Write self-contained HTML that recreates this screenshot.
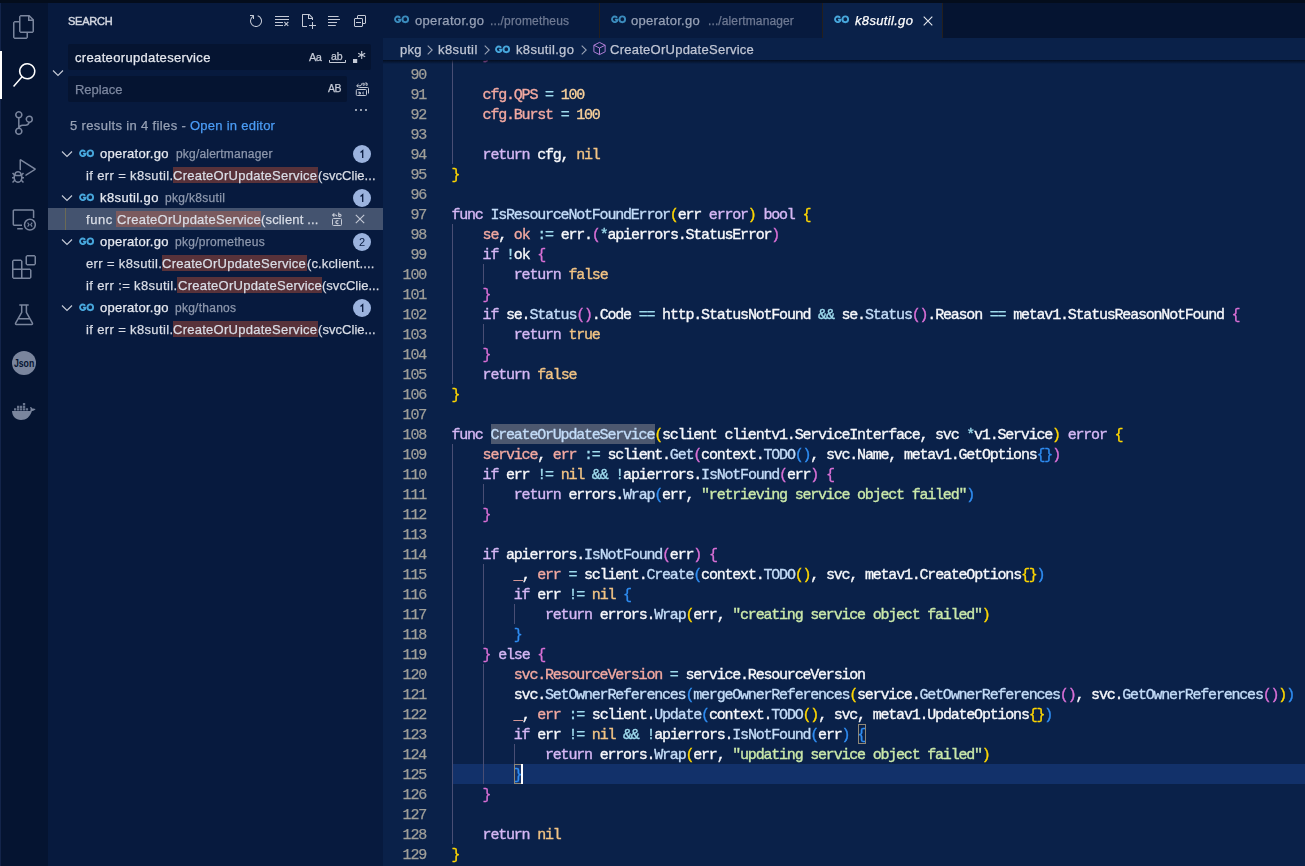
<!DOCTYPE html>
<html><head><meta charset="utf-8"><title>k8sutil.go</title><style>
*{box-sizing:border-box}
html,body{margin:0;padding:0}
body{width:1305px;height:866px;overflow:hidden;position:relative;background:#0a2149;font-family:"Liberation Sans",sans-serif;font-size:13px;color:#d6dae3}
.abs{position:absolute}
.t{position:absolute;line-height:1;white-space:pre;will-change:transform;-webkit-text-stroke:.25px}
#top{left:0;top:0;width:1305px;height:3px;background:#040d1c}
#act{left:0;top:3px;width:48px;height:863px;background:#051431}
#act .edge{position:absolute;left:0;top:0;width:1px;height:863px;background:#13244a}
#act .ind{position:absolute;left:0;top:48px;width:2px;height:48px;background:#fff}
#act svg{position:absolute}
#side{left:48px;top:0;width:335px;height:866px;background:#071a3e}
#sidetop{left:48px;top:0;width:335px;height:3px;background:#040d1c}
.inp{position:absolute;background:#051431;border-radius:2px}
.selrow{position:absolute;left:0;width:335px;height:22px;background:#44536f}
.badge{position:absolute;width:18px;height:18px;border-radius:9px;background:#9bb3de;color:#0a1c40;font-size:11px;line-height:18px;text-align:center}
.hl{background:#58323a;box-shadow:0 -1px 0 #5c2f35,0 1px 0 #5c2f35}
.sel .hl{background:#7d5a5d;box-shadow:0 -1px 0 #7d5a5d,0 1px 0 #7d5a5d}
#tabs{left:383px;top:3px;width:922px;height:35px;background:#051431}
.tab{position:absolute;top:0;height:35px;background:#071a3e;border-right:1px solid #241f1c}
.tab.on{background:#0a2149}
#crumbs{left:383px;top:38px;width:922px;height:22px;background:#0a2149}
#shadow{left:383px;top:60px;width:922px;height:4px;background:linear-gradient(rgba(3,11,26,.85),rgba(3,11,26,0))}
#ed{left:383px;top:60px;width:922px;height:806px;overflow:hidden}
#edin{position:absolute;left:0;top:-60px;width:922px;height:866px}
.ln{position:absolute;left:0;width:43px;height:20px;text-align:right;color:#a09f99;padding-top:2px;will-change:transform;-webkit-text-stroke:.25px}
.cl{position:absolute;left:69px;width:853px;height:20px;white-space:pre}
.cl.cur{background:#12316a}
.ln,.cl{font-family:"Liberation Mono",monospace;font-size:15px;letter-spacing:-1.2015px;line-height:20px}
.tx{position:relative;top:2px;left:-.6px;color:#f7f8fb;will-change:transform;-webkit-text-stroke:.35px}
.g{position:absolute;top:0;width:1px;height:20px;background:#494e74}
.k{color:#d6b8f5}.f{color:#c3dcf8}.h{color:#c3dcf8}
.hb{position:absolute;top:0;height:20px;background:#4d586f}.v{color:#f2a9a1}.o{color:#9fdcee}.n{color:#f8d09a}.c{color:#f3c484}.s{color:#cbe9aa}
.b1{color:#ffd700}.b2{color:#da70d6}.b3{color:#2f8df2}
.bm{}
.bmb{position:absolute;height:20px;width:8px;border:1px solid #8f8878}
.cursor{position:absolute;width:2px;height:20px;background:#fff}
</style></head><body>
<div id="top" class="abs"></div>
<div id="act" class="abs"><div class="edge"></div><div class="ind"></div>
<svg style="left:12px;top:12px" width="24" height="24" viewBox="0 0 24 24" fill="#7a859d"><path d="M17.5 0h-9L7 1.5V6H2.5L1 7.500v15.070L2.500 24h12.070L16 22.570V18h4.700l1.300-1.430V4.500L17.500 0zm0 2.120l2.380 2.380H17.500V2.120zm-3 20.380h-12v-15H7v9.070L8.500 18h6v4.500zm6-6h-12v-15H16V6h4.500v10.500z"/></svg>
<svg style="left:12px;top:60px" width="24" height="24" viewBox="0 0 24 24" fill="#ffffff"><path d="M15.250 0a8.250 8.250 0 0 0-6.180 13.720L1 22.880l1.120 1 8.050-9.120A8.251 8.251 0 1 0 15.250.010V0zm0 15a6.750 6.750 0 1 1 0-13.500 6.750 6.750 0 0 1 0 13.500z"/></svg>
<svg style="left:12px;top:108px" width="24" height="24" viewBox="0 0 24 24" fill="#7a859d"><path d="M21.007 8.222A3.738 3.738 0 0 0 15.045 5.200a3.737 3.737 0 0 0 1.156 6.583 2.988 2.988 0 0 1-2.668 1.670h-2.990a4.456 4.456 0 0 0-2.989 1.165V7.400a3.737 3.737 0 1 0-1.494 0v9.117a3.776 3.776 0 1 0 1.816.099 2.990 2.990 0 0 1 2.668-1.667h2.990a4.484 4.484 0 0 0 4.223-3.039 3.736 3.736 0 0 0 3.250-3.687zM4.565 3.738a2.242 2.242 0 1 1 4.484 0 2.242 2.242 0 0 1-4.484 0zm4.484 16.441a2.242 2.242 0 1 1-4.484 0 2.242 2.242 0 0 1 4.484 0zm8.221-9.715a2.242 2.242 0 1 1 0-4.485 2.242 2.242 0 0 1 0 4.485z"/></svg>
<svg style="left:12px;top:156px" width="24" height="24" viewBox="0 0 24 24" fill="#7a859d"><path d="M10.940 13.500l-1.320 1.320a3.730 3.730 0 0 0-7.240 0L1.060 13.500 0 14.560l1.720 1.720-.220.220V18H0v1.500h1.500v.080c.077.489.214.966.410 1.420L0 22.940 1.060 24l1.650-1.650A4.308 4.308 0 0 0 6 24a4.310 4.310 0 0 0 3.290-1.650L10.940 24 12 22.940 10.090 21c.198-.464.336-.951.410-1.450v-.100H12V18h-1.500v-1.500l-.220-.220L12 14.560l-1.060-1.060zM6 13.500a2.250 2.250 0 0 1 2.250 2.250h-4.500A2.250 2.250 0 0 1 6 13.500zm3 6a3.330 3.330 0 0 1-3 3 3.330 3.330 0 0 1-3-3v-2.250h6v2.250zm14.760-9.900v1.260L13.500 17.370V15.600l8.500-5.370L9 2v9.460a5.070 5.070 0 0 0-1.500-.720V.630L8.640 0l15.120 9.600z"/></svg>
<svg style="left:12px;top:204px" width="24" height="24" viewBox="0 0 24 24" fill="none" stroke="#7a859d" stroke-width="1.500"><path d="M10 18.350H2.300a1 1 0 0 1-1-1V4a1 1 0 0 1 1-1H20.600a1 1 0 0 1 1 1V10.900M5.200 21.700H10.800"/><circle cx="17.900" cy="17.700" r="5.400"/><path d="M15.600 15.700l1.500 2-1.500 2M20.200 15.700l-1.500 2 1.500 2" stroke-width="1.100"/></svg>
<svg style="left:12px;top:252px" width="24" height="24" viewBox="0 0 24 24" fill="#7a859d"><path d="M13.500 1.500L15 0h7.500L24 1.500V9l-1.500 1.500H15L13.500 9V1.500zm1.500 0V9h7.500V1.500H15zM0 15V6l1.500-1.500H9L10.500 6v7.500H18l1.500 1.500v7.500L18 24H1.500L0 22.500V15zm9-1.500V6H1.500v7.500H9zM9 15H1.500v7.500H9V15zm1.500 7.500H18V15h-7.500v7.500z"/></svg>
<svg style="left:12px;top:300px" width="24" height="24" viewBox="0 0 24 24" fill="none" stroke="#7a859d" stroke-width="1.500" stroke-linejoin="round"><path d="M7.300 2.100H16.700M9.700 2.100V9.400L3.600 20.200a.8.800 0 0 0 .7 1.200H19.700a.8.800 0 0 0 .7-1.200L14.400 9.400V2.100M6.600 15.700H17.400"/></svg>
<svg style="left:12px;top:348px" width="24" height="24" viewBox="0 0 24 24"><circle cx="12" cy="12" r="12" fill="#7a859d"/><text transform="translate(12.100,16) scale(.760,1)" x="0" y="0" text-anchor="middle" font-family="Liberation Sans, sans-serif" font-weight="bold" font-size="11.500" fill="#051431">Json</text></svg>
<svg style="left:12px;top:396px" width="24" height="24" viewBox="0 0 24 24" fill="#7a859d"><path d="M0 11.900H18.300c.5-1.500.3-2.900-.3-3.900 1-.3 1.800.2 2.200 1.500 1-.2 2.300-.1 3.400.6-.7 1.300-2 1.900-3.700 1.800C18.200 17.600 14.400 20.900 9 20.900 3.600 20.900.3 17.300 0 11.900z"/><path d="M2 9.200h2.300v2.300h-2.300zM5 9.200h2.300v2.300h-2.300zM7.9 9.200h2.300v2.300h-2.300zM10.9 9.200h2.300v2.300h-2.300zM13.8 9.200h2.300v2.300h-2.300zM5 6.700h2.300v2.200h-2.300zM7.9 6.700h2.300v2.200h-2.300zM10.9 6.700h2.300v2.200h-2.300zM10.900 4h2.300v2.300h-2.300z" opacity=".85"/></svg>
</div>
<div id="side" class="abs">
<span class="t" style="left:19.70px;top:15.69px;font-size:11px;letter-spacing:-0.241px;color:#d3d7e0;-webkit-text-stroke:.45px;">SEARCH</span>
<svg class="abs" style="left:200.0px;top:13.0px" width="16" height="16" viewBox="0 0 16 16" fill="#c5cad6"><path d="M4.681 3H2V2h3.500l.5.500V6H5V4a5 5 0 1 0 4.530-.761l.302-.954A6 6 0 1 1 4.681 3z"/></svg>
<svg class="abs" style="left:226.0px;top:13.0px" width="16" height="16" viewBox="0 0 16 16" fill="#c5cad6"><path d="M10 12.600l.7.700 1.600-1.600 1.600 1.600.8-.700L13 11l1.700-1.600-.8-.800-1.600 1.700-1.600-1.700-.7.800 1.600 1.600-1.600 1.600zM1 4h14V3H1v1zm0 3h14V6H1v1zm8 2.500V9H1v1h8v-.500zM9 13v-1H1v1h8z"/></svg>
<svg class="abs" style="left:252.0px;top:13.0px" width="16" height="16" viewBox="0 0 16 16" fill="#c5cad6"><path d="M9.500 1.100l3.400 3.500.1.400v2h-1V6H8V2H3v11h4v1H2.500l-.5-.500v-12l.5-.500h6.700l.3.100zM9 2v3h2.900L9 2zm4 14h-1v-3H9v-1h3V9h1v3h3v1h-3v3z"/></svg>
<svg class="abs" style="left:278.0px;top:13.0px" width="16" height="16" viewBox="0 0 16 16" fill="#c5cad6"><path d="M2 3h10.600v1H2zM2 6h12v1H2zM2 9h9v1H2zM2 12h7.800v1H2z"/></svg>
<svg class="abs" style="left:304.0px;top:13.0px" width="16" height="16" viewBox="0 0 16 16" fill="#c5cad6"><path d="M9 9H4v1h5V9zM5 3l1-1h7l1 1v7l-1 1h-2v2l-1 1H3l-1-1V6l1-1h2V3zm1 2h4l1 1v4h2V3H6v2zm4 1H3v7h7V6z"/></svg>
<div class="inp" style="left:20px;top:44px;width:303px;height:26px"></div>
<span class="t" style="left:26.80px;top:51.00px;font-size:13px;letter-spacing:0.337px;color:#e4e7ee;">createorupdateservice</span>
<span class="t" style="left:260.50px;top:51.69px;font-size:11px;letter-spacing:-0.578px;color:#c5cad6;">Aa</span>
<span class="t" style="left:282.70px;top:51.11px;font-size:10.5px;letter-spacing:-0.140px;color:#c5cad6;">ab</span>
<svg class="abs" style="left:281px;top:59px" width="18" height="5" viewBox="0 0 18 5" fill="none" stroke="#c5cad6"><path d="M0.500 1v2.500h16v-2.500"/></svg>
<svg class="abs" style="left:305px;top:50px" width="14" height="14" viewBox="0 0 14 14" fill="none" stroke="#c5cad6" stroke-width="1.100"><rect x="0" y="9" width="4.200" height="4" fill="#c5cad6" stroke="none"/><path d="M8.700 1v8M5.200 3.200l7 3.600M12.200 3.200l-7 3.600"/></svg>
<svg class="abs" style="left:4.0px;top:69.4px" width="12" height="8" viewBox="0 0 12 8"><path d="M1 1.500L6 6.500L11 1.500" fill="none" stroke="#c5cad6" stroke-width="1.150"/></svg>
<div class="inp" style="left:20px;top:76px;width:279px;height:26px"></div>
<span class="t" style="left:27.10px;top:83.00px;font-size:13px;letter-spacing:-0.028px;color:#7c879f;">Replace</span>
<span class="t" style="left:280.20px;top:83.11px;font-size:10.5px;letter-spacing:-0.554px;color:#c5cad6;">AB</span>
<svg class="abs" style="left:307px;top:81px" width="16" height="16" viewBox="0 0 16 16" fill="none" stroke="#c5cad6" stroke-width="1"><rect x="1.300" y="8.500" width="10.200" height="6" rx="1"/><path d="M4.300 6.500h8.200a1 1 0 0 1 1 1v5"/><path d="M1.800 4.800h3.200a1.500 1.500 0 0 0 1.500-1.500v0a1 1 0 0 1 1-1M3.500 3l-1.800 1.800L3.500 6.600"/><path d="M4 10.500v2.500M4 11.500h1.500v1.500H4M8.700 11a1 1 0 1 0 0 2" stroke-width=".900"/><path d="M8 2.300h1.300v2H8zM11 1v3.300M11 2.500h1.300v1.800H11" stroke-width=".800"/></svg>
<svg class="abs" style="left:305.0px;top:102.0px" width="16" height="16" viewBox="0 0 16 16" fill="#c5cad6"><path d="M4 8a1 1 0 1 1-2 0 1 1 0 0 1 2 0zm5 0a1 1 0 1 1-2 0 1 1 0 0 1 2 0zm5 0a1 1 0 1 1-2 0 1 1 0 0 1 2 0z"/></svg>
<span class="t" style="left:22.20px;top:119.00px;font-size:13px;letter-spacing:0.353px;color:#97a1b5;">5 results in 4 files - </span>
<span class="t" style="left:142.30px;top:119.00px;font-size:13px;letter-spacing:0.253px;color:#4b9cf5;">Open in editor</span>
<svg class="abs" style="left:13.0px;top:149.5px" width="12" height="8" viewBox="0 0 12 8"><path d="M1 1.500L6 6.500L11 1.500" fill="none" stroke="#c5cad6" stroke-width="1.150"/></svg>
<svg class="abs" style="left:30.9px;top:148.5px;opacity:0.93" width="16" height="9" viewBox="0 0 16 9"><g fill="none" stroke="#4db2e8" stroke-width="1.9"><path d="M6.100 2.700A2.750 2.850 0 1 0 6.550 4.600H3.900"/><ellipse cx="11.300" cy="4.300" rx="2.800" ry="2.900"/></g></svg>
<span class="t" style="left:52.00px;top:147.00px;font-size:13px;letter-spacing:0.266px;color:#e6e9f0;">operator.go</span>
<span class="t" style="left:127.80px;top:147.84px;font-size:12px;letter-spacing:0.201px;color:#8e98ad;">pkg/alertmanager</span>
<span class="badge" style="left:305px;top:145px"></span>
<svg class="abs" style="left:312px;top:149px" width="6" height="10" viewBox="0 0 6 10" fill="none" stroke="#0a1c40" stroke-width="1.300"><path d="M0.500 3.500L2.700 1.700V9"/></svg>
<i class="abs" style="left:125.0px;top:167px;width:145.0px;height:16px;background:#58323a"></i>
<span class="t" style="left:38.00px;top:169.00px;font-size:13px;letter-spacing:0.360px;color:#d9dde6;">if err = k8sutil.</span>
<span class="t" style="left:125.40px;top:169.00px;font-size:13px;letter-spacing:0.265px;color:#d9dde6;">CreateOrUpdateService</span>
<span class="t" style="left:270.20px;top:169.00px;font-size:13px;letter-spacing:0.049px;color:#d9dde6;">(svcClie...</span>
<svg class="abs" style="left:13.0px;top:193.5px" width="12" height="8" viewBox="0 0 12 8"><path d="M1 1.500L6 6.500L11 1.500" fill="none" stroke="#c5cad6" stroke-width="1.150"/></svg>
<svg class="abs" style="left:30.9px;top:192.5px;opacity:0.93" width="16" height="9" viewBox="0 0 16 9"><g fill="none" stroke="#4db2e8" stroke-width="1.9"><path d="M6.100 2.700A2.750 2.850 0 1 0 6.550 4.600H3.900"/><ellipse cx="11.300" cy="4.300" rx="2.800" ry="2.900"/></g></svg>
<span class="t" style="left:52.00px;top:191.00px;font-size:13px;letter-spacing:0.388px;color:#e6e9f0;">k8sutil.go</span>
<span class="t" style="left:117.30px;top:191.84px;font-size:12px;letter-spacing:0.319px;color:#8e98ad;">pkg/k8sutil</span>
<span class="badge" style="left:305px;top:189px"></span>
<svg class="abs" style="left:312px;top:193px" width="6" height="10" viewBox="0 0 6 10" fill="none" stroke="#0a1c40" stroke-width="1.300"><path d="M0.500 3.500L2.700 1.700V9"/></svg>
<div class="selrow" style="top:208px"></div>
<i class="abs" style="left:17px;top:208px;width:1px;height:22px;background:#6b6a55"></i>
<i class="abs" style="left:68.3px;top:211px;width:144.8px;height:16px;background:#7b5a5e"></i>
<span class="t" style="left:37.80px;top:213.00px;font-size:13px;letter-spacing:0.543px;color:#d9dde6;">func </span>
<span class="t" style="left:68.70px;top:213.00px;font-size:13px;letter-spacing:0.256px;color:#d9dde6;">CreateOrUpdateService</span>
<span class="t" style="left:213.30px;top:213.00px;font-size:13px;letter-spacing:0.156px;color:#d9dde6;">(sclient ...</span>
<svg class="abs" style="left:281.0px;top:211.0px" width="16" height="16" viewBox="0 0 16 16" fill="none" stroke="#c5cad6" stroke-width="1"><rect x="3.500" y="7.500" width="9" height="7" rx="1"/><path d="M5.300 2.300L3.600 4l1.700 1.700M3.800 4h2.700a1.300 1.300 0 0 1 1.300 1.300M9.700 1.500v4M9.700 3.400h1.300a1 1 0 0 1 0 2.100H9.700" stroke-width="1.100"/><path d="M9.300 10a1.450 1.450 0 1 0 0 2.200" stroke-width="1.300"/></svg>
<svg class="abs" style="left:304.0px;top:211.0px" width="16" height="16" viewBox="0 0 16 16" fill="none" stroke="#c5cad6" stroke-width="1.1"><path d="M3.800 3.800l8.400 8.400M12.200 3.800l-8.400 8.400"/></svg>
<svg class="abs" style="left:13.0px;top:237.5px" width="12" height="8" viewBox="0 0 12 8"><path d="M1 1.500L6 6.500L11 1.500" fill="none" stroke="#c5cad6" stroke-width="1.150"/></svg>
<svg class="abs" style="left:30.9px;top:236.5px;opacity:0.93" width="16" height="9" viewBox="0 0 16 9"><g fill="none" stroke="#4db2e8" stroke-width="1.9"><path d="M6.100 2.700A2.750 2.850 0 1 0 6.550 4.600H3.900"/><ellipse cx="11.300" cy="4.300" rx="2.800" ry="2.900"/></g></svg>
<span class="t" style="left:52.00px;top:235.00px;font-size:13px;letter-spacing:0.266px;color:#e6e9f0;">operator.go</span>
<span class="t" style="left:127.20px;top:235.84px;font-size:12px;letter-spacing:0.275px;color:#8e98ad;">pkg/prometheus</span>
<span class="badge" style="left:305px;top:233px"></span>
<span class="t" style="left:310.70px;top:236.69px;font-size:11px;letter-spacing:0.000px;color:#0a1c40;-webkit-text-stroke:0;">2</span>
<i class="abs" style="left:113.8px;top:255px;width:144.8px;height:16px;background:#58323a"></i>
<span class="t" style="left:38.00px;top:257.00px;font-size:13px;letter-spacing:0.360px;color:#d9dde6;">err = k8sutil.</span>
<span class="t" style="left:114.20px;top:257.00px;font-size:13px;letter-spacing:0.256px;color:#d9dde6;">CreateOrUpdateService</span>
<span class="t" style="left:258.80px;top:257.00px;font-size:13px;letter-spacing:0.133px;color:#d9dde6;">(c.kclient....</span>
<i class="abs" style="left:129.1px;top:277px;width:144.8px;height:16px;background:#58323a"></i>
<span class="t" style="left:38.00px;top:279.00px;font-size:13px;letter-spacing:0.367px;color:#d9dde6;">if err := k8sutil.</span>
<span class="t" style="left:129.50px;top:279.00px;font-size:13px;letter-spacing:0.256px;color:#d9dde6;">CreateOrUpdateService</span>
<span class="t" style="left:274.10px;top:279.00px;font-size:13px;letter-spacing:0.022px;color:#d9dde6;">(svcClie...</span>
<svg class="abs" style="left:13.0px;top:303.5px" width="12" height="8" viewBox="0 0 12 8"><path d="M1 1.500L6 6.500L11 1.500" fill="none" stroke="#c5cad6" stroke-width="1.150"/></svg>
<svg class="abs" style="left:30.9px;top:302.5px;opacity:0.93" width="16" height="9" viewBox="0 0 16 9"><g fill="none" stroke="#4db2e8" stroke-width="1.9"><path d="M6.100 2.700A2.750 2.850 0 1 0 6.550 4.600H3.900"/><ellipse cx="11.300" cy="4.300" rx="2.800" ry="2.900"/></g></svg>
<span class="t" style="left:52.00px;top:301.00px;font-size:13px;letter-spacing:0.266px;color:#e6e9f0;">operator.go</span>
<span class="t" style="left:127.20px;top:301.84px;font-size:12px;letter-spacing:0.259px;color:#8e98ad;">pkg/thanos</span>
<span class="badge" style="left:305px;top:299px"></span>
<svg class="abs" style="left:312px;top:303px" width="6" height="10" viewBox="0 0 6 10" fill="none" stroke="#0a1c40" stroke-width="1.300"><path d="M0.500 3.500L2.700 1.700V9"/></svg>
<i class="abs" style="left:125.0px;top:321px;width:145.0px;height:16px;background:#58323a"></i>
<span class="t" style="left:38.00px;top:323.00px;font-size:13px;letter-spacing:0.360px;color:#d9dde6;">if err = k8sutil.</span>
<span class="t" style="left:125.40px;top:323.00px;font-size:13px;letter-spacing:0.265px;color:#d9dde6;">CreateOrUpdateService</span>
<span class="t" style="left:270.20px;top:323.00px;font-size:13px;letter-spacing:0.049px;color:#d9dde6;">(svcClie...</span>
</div><div id="sidetop" class="abs"></div>
<div id="tabs" class="abs">
<div class="tab" style="left:0;width:217px"></div>
<div class="tab" style="left:217px;width:223px"></div>
<div class="tab on" style="left:440px;width:120px"></div>
<svg class="abs" style="left:11.0px;top:12.1px;opacity:0.75" width="16" height="9" viewBox="0 0 16 9"><g fill="none" stroke="#4db2e8" stroke-width="1.9"><path d="M6.100 2.700A2.750 2.850 0 1 0 6.550 4.600H3.900"/><ellipse cx="11.300" cy="4.300" rx="2.800" ry="2.900"/></g></svg>
<span class="t" style="left:31.50px;top:11.00px;font-size:13px;letter-spacing:0.329px;color:#97a1b6;">operator.go</span>
<span class="t" style="left:107.30px;top:11.84px;font-size:12px;letter-spacing:0.178px;color:#6f7a93;">.../prometheus</span>
<svg class="abs" style="left:228.0px;top:12.1px;opacity:0.75" width="16" height="9" viewBox="0 0 16 9"><g fill="none" stroke="#4db2e8" stroke-width="1.9"><path d="M6.100 2.700A2.750 2.850 0 1 0 6.550 4.600H3.900"/><ellipse cx="11.300" cy="4.300" rx="2.800" ry="2.900"/></g></svg>
<span class="t" style="left:248.30px;top:11.00px;font-size:13px;letter-spacing:0.302px;color:#97a1b6;">operator.go</span>
<span class="t" style="left:324.60px;top:11.84px;font-size:12px;letter-spacing:0.116px;color:#6f7a93;">.../alertmanager</span>
<svg class="abs" style="left:450.8px;top:12.1px;opacity:0.93" width="16" height="9" viewBox="0 0 16 9"><g fill="none" stroke="#4db2e8" stroke-width="1.9"><path d="M6.100 2.700A2.750 2.850 0 1 0 6.550 4.600H3.900"/><ellipse cx="11.300" cy="4.300" rx="2.800" ry="2.900"/></g></svg>
<span class="t" style="left:471.70px;top:11.00px;font-size:13px;letter-spacing:0.328px;color:#ffffff;font-style:italic;">k8sutil.go</span>
<svg class="abs" style="left:539.3px;top:12.0px" width="12" height="12" viewBox="0 0 12 12" fill="none" stroke="#e6e9f0" stroke-width="1.100"><path d="M1.700 1.700l8.600 8.600M10.300 1.700l-8.600 8.600"/></svg>
</div>
<div id="crumbs" class="abs">
<span class="t" style="left:16.80px;top:5.40px;font-size:13px;letter-spacing:0.313px;color:#c0c6d4;">pkg</span>
<svg class="abs" style="left:43.0px;top:5.6px" width="8" height="12" viewBox="0 0 8 12"><path d="M1.700 1.700l4.500 4.300-4.500 4.300" fill="none" stroke="#9aa3b6" stroke-width="1.100"/></svg>
<span class="t" style="left:54.90px;top:5.40px;font-size:13px;letter-spacing:0.407px;color:#c0c6d4;">k8sutil</span>
<svg class="abs" style="left:99.6px;top:5.6px" width="8" height="12" viewBox="0 0 8 12"><path d="M1.700 1.700l4.500 4.300-4.500 4.300" fill="none" stroke="#9aa3b6" stroke-width="1.100"/></svg>
<svg class="abs" style="left:111.9px;top:6.5px;opacity:0.93" width="16" height="9" viewBox="0 0 16 9"><g fill="none" stroke="#4db2e8" stroke-width="1.9"><path d="M6.100 2.700A2.750 2.850 0 1 0 6.550 4.600H3.900"/><ellipse cx="11.300" cy="4.300" rx="2.800" ry="2.900"/></g></svg>
<span class="t" style="left:132.80px;top:5.40px;font-size:13px;letter-spacing:0.328px;color:#c0c6d4;">k8sutil.go</span>
<svg class="abs" style="left:196.7px;top:5.6px" width="8" height="12" viewBox="0 0 8 12"><path d="M1.700 1.700l4.500 4.300-4.500 4.300" fill="none" stroke="#9aa3b6" stroke-width="1.100"/></svg>
<svg class="abs" style="left:208.6px;top:3.1px" width="15" height="15" viewBox="0 0 16 16" fill="none" stroke="#b180d7" stroke-width="1.050" stroke-linejoin="round"><path d="M8 1.500L2 4.500v7l6 3 6-3v-7zM2 4.500l6 3 6-3M8 7.500v7"/></svg>
<span class="t" style="left:227.40px;top:5.40px;font-size:13px;letter-spacing:0.256px;color:#c0c6d4;">CreateOrUpdateService</span>
</div>

<div id="ed" class="abs"><div id="edin">
<div class="ln" style="top:44px">89</div><div class="cl" style="top:44px"><i class="g" style="left:0.0px"></i><span class="tx">    <span class="b2">}</span></span></div>
<div class="ln" style="top:64px">90</div><div class="cl" style="top:64px"><i class="g" style="left:0.0px"></i><span class="tx"></span></div>
<div class="ln" style="top:84px">91</div><div class="cl" style="top:84px"><i class="g" style="left:0.0px"></i><span class="tx">    <span class="v">cfg.QPS</span> <span class="o">=</span> <span class="n">100</span></span></div>
<div class="ln" style="top:104px">92</div><div class="cl" style="top:104px"><i class="g" style="left:0.0px"></i><span class="tx">    <span class="v">cfg.Burst</span> <span class="o">=</span> <span class="n">100</span></span></div>
<div class="ln" style="top:124px">93</div><div class="cl" style="top:124px"><i class="g" style="left:0.0px"></i><span class="tx"></span></div>
<div class="ln" style="top:144px">94</div><div class="cl" style="top:144px"><i class="g" style="left:0.0px"></i><span class="tx">    <span class="k">return</span> cfg, <span class="c">nil</span></span></div>
<div class="ln" style="top:164px">95</div><div class="cl" style="top:164px"><span class="tx"><span class="b1">}</span></span></div>
<div class="ln" style="top:184px">96</div><div class="cl" style="top:184px"><span class="tx"></span></div>
<div class="ln" style="top:204px">97</div><div class="cl" style="top:204px"><span class="tx"><span class="k">func</span> <span class="f">IsResourceNotFoundError</span><span class="b1">(</span>err <span class="k">error</span><span class="b1">)</span> <span class="k">bool</span> <span class="b1">{</span></span></div>
<div class="ln" style="top:224px">98</div><div class="cl" style="top:224px"><i class="g" style="left:0.0px"></i><span class="tx">    <span class="v">se</span>, <span class="v">ok</span> <span class="o">:=</span> err.<span class="b2">(</span><span class="o">*</span>apierrors.StatusError<span class="b2">)</span></span></div>
<div class="ln" style="top:244px">99</div><div class="cl" style="top:244px"><i class="g" style="left:0.0px"></i><span class="tx">    <span class="k">if</span> <span class="o">!</span>ok <span class="b2">{</span></span></div>
<div class="ln" style="top:264px">100</div><div class="cl" style="top:264px"><i class="g" style="left:0.0px"></i><i class="g" style="left:31.2px"></i><span class="tx">        <span class="k">return</span> <span class="c">false</span></span></div>
<div class="ln" style="top:284px">101</div><div class="cl" style="top:284px"><i class="g" style="left:0.0px"></i><span class="tx">    <span class="b2">}</span></span></div>
<div class="ln" style="top:304px">102</div><div class="cl" style="top:304px"><i class="g" style="left:0.0px"></i><span class="tx">    <span class="k">if</span> se.<span class="f">Status</span><span class="b2">(</span><span class="b2">)</span>.Code <span class="o">==</span> h<span class="x">ttp</span>.StatusNotFound <span class="o">&amp;&amp;</span> se.<span class="f">Status</span><span class="b2">(</span><span class="b2">)</span>.Reason <span class="o">==</span> metav1.StatusReasonNotFound <span class="b2">{</span></span></div>
<div class="ln" style="top:324px">103</div><div class="cl" style="top:324px"><i class="g" style="left:0.0px"></i><i class="g" style="left:31.2px"></i><span class="tx">        <span class="k">return</span> <span class="c">true</span></span></div>
<div class="ln" style="top:344px">104</div><div class="cl" style="top:344px"><i class="g" style="left:0.0px"></i><span class="tx">    <span class="b2">}</span></span></div>
<div class="ln" style="top:364px">105</div><div class="cl" style="top:364px"><i class="g" style="left:0.0px"></i><span class="tx">    <span class="k">return</span> <span class="c">false</span></span></div>
<div class="ln" style="top:384px">106</div><div class="cl" style="top:384px"><span class="tx"><span class="b1">}</span></span></div>
<div class="ln" style="top:404px">107</div><div class="cl" style="top:404px"><span class="tx"></span></div>
<div class="ln" style="top:424px">108</div><div class="cl" style="top:424px"><i class="hb" style="left:39px;width:163.8px"></i><span class="tx"><span class="k">func</span> <span class="h">CreateOrUpdateService</span><span class="b1">(</span>sclient clientv1.ServiceInterface, svc <span class="o">*</span>v1.Service<span class="b1">)</span> <span class="k">error</span> <span class="b1">{</span></span></div>
<div class="ln" style="top:444px">109</div><div class="cl" style="top:444px"><i class="g" style="left:0.0px"></i><span class="tx">    <span class="v">service</span>, <span class="v">err</span> <span class="o">:=</span> sclient.<span class="f">Get</span><span class="b2">(</span>context.<span class="f">TODO</span><span class="b3">(</span><span class="b3">)</span>, svc.Name, metav1.GetOptions<span class="b3">{</span><span class="b3">}</span><span class="b2">)</span></span></div>
<div class="ln" style="top:464px">110</div><div class="cl" style="top:464px"><i class="g" style="left:0.0px"></i><span class="tx">    <span class="k">if</span> err <span class="o">!=</span> <span class="c">nil</span> <span class="o">&amp;&amp;</span> <span class="o">!</span>apierrors.<span class="f">IsNotFound</span><span class="b2">(</span>err<span class="b2">)</span> <span class="b2">{</span></span></div>
<div class="ln" style="top:484px">111</div><div class="cl" style="top:484px"><i class="g" style="left:0.0px"></i><i class="g" style="left:31.2px"></i><span class="tx">        <span class="k">return</span> errors.<span class="f">Wrap</span><span class="b3">(</span>err, <span class="s">"retrieving service object failed"</span><span class="b3">)</span></span></div>
<div class="ln" style="top:504px">112</div><div class="cl" style="top:504px"><i class="g" style="left:0.0px"></i><span class="tx">    <span class="b2">}</span></span></div>
<div class="ln" style="top:524px">113</div><div class="cl" style="top:524px"><i class="g" style="left:0.0px"></i><span class="tx"></span></div>
<div class="ln" style="top:544px">114</div><div class="cl" style="top:544px"><i class="g" style="left:0.0px"></i><span class="tx">    <span class="k">if</span> apierrors.<span class="f">IsNotFound</span><span class="b2">(</span>err<span class="b2">)</span> <span class="b2">{</span></span></div>
<div class="ln" style="top:564px">115</div><div class="cl" style="top:564px"><i class="g" style="left:0.0px"></i><i class="g" style="left:31.2px"></i><span class="tx">        <span class="v">_</span>, <span class="v">err</span> <span class="o">=</span> sclient.<span class="f">Create</span><span class="b3">(</span>context.<span class="f">TODO</span><span class="b1">(</span><span class="b1">)</span>, svc, metav1.CreateOptions<span class="b1">{</span><span class="b1">}</span><span class="b3">)</span></span></div>
<div class="ln" style="top:584px">116</div><div class="cl" style="top:584px"><i class="g" style="left:0.0px"></i><i class="g" style="left:31.2px"></i><span class="tx">        <span class="k">if</span> err <span class="o">!=</span> <span class="c">nil</span> <span class="b3">{</span></span></div>
<div class="ln" style="top:604px">117</div><div class="cl" style="top:604px"><i class="g" style="left:0.0px"></i><i class="g" style="left:31.2px"></i><i class="g" style="left:62.4px"></i><span class="tx">            <span class="k">return</span> errors.<span class="f">Wrap</span><span class="b1">(</span>err, <span class="s">"creating service object failed"</span><span class="b1">)</span></span></div>
<div class="ln" style="top:624px">118</div><div class="cl" style="top:624px"><i class="g" style="left:0.0px"></i><i class="g" style="left:31.2px"></i><span class="tx">        <span class="b3">}</span></span></div>
<div class="ln" style="top:644px">119</div><div class="cl" style="top:644px"><i class="g" style="left:0.0px"></i><span class="tx">    <span class="b2">}</span> <span class="k">else</span> <span class="b2">{</span></span></div>
<div class="ln" style="top:664px">120</div><div class="cl" style="top:664px"><i class="g" style="left:0.0px"></i><i class="g" style="left:31.2px"></i><span class="tx">        <span class="v">svc.ResourceVersion</span> <span class="o">=</span> service.ResourceVersion</span></div>
<div class="ln" style="top:684px">121</div><div class="cl" style="top:684px"><i class="g" style="left:0.0px"></i><i class="g" style="left:31.2px"></i><span class="tx">        svc.<span class="f">SetOwnerReferences</span><span class="b3">(</span><span class="f">mergeOwnerReferences</span><span class="b1">(</span>service.<span class="f">GetOwnerReferences</span><span class="b2">(</span><span class="b2">)</span>, svc.<span class="f">GetOwnerReferences</span><span class="b2">(</span><span class="b2">)</span><span class="b1">)</span><span class="b3">)</span></span></div>
<div class="ln" style="top:704px">122</div><div class="cl" style="top:704px"><i class="g" style="left:0.0px"></i><i class="g" style="left:31.2px"></i><span class="tx">        <span class="v">_</span>, <span class="v">err</span> <span class="o">:=</span> sclient.<span class="f">Update</span><span class="b3">(</span>context.<span class="f">TODO</span><span class="b1">(</span><span class="b1">)</span>, svc, metav1.UpdateOptions<span class="b1">{</span><span class="b1">}</span><span class="b3">)</span></span></div>
<div class="ln" style="top:724px">123</div><div class="cl" style="top:724px"><i class="g" style="left:0.0px"></i><i class="g" style="left:31.2px"></i><span class="tx">        <span class="k">if</span> err <span class="o">!=</span> <span class="c">nil</span> <span class="o">&amp;&amp;</span> <span class="o">!</span>apierrors.<span class="f">IsNotFound</span><span class="b3">(</span>err<span class="b3">)</span> <span class="b3 bm">{</span></span></div>
<div class="ln" style="top:744px">124</div><div class="cl" style="top:744px"><i class="g" style="left:0.0px"></i><i class="g" style="left:31.2px"></i><i class="g" style="left:62.4px"></i><span class="tx">            <span class="k">return</span> errors.<span class="f">Wrap</span><span class="b1">(</span>err, <span class="s">"updating service object failed"</span><span class="b1">)</span></span></div>
<div class="ln" style="top:764px">125</div><div class="cl cur" style="top:764px"><i class="g" style="left:0.0px"></i><i class="g" style="left:31.2px"></i><span class="tx">        <span class="b3 bm">}</span></span></div>
<div class="ln" style="top:784px">126</div><div class="cl" style="top:784px"><i class="g" style="left:0.0px"></i><span class="tx">    <span class="b2">}</span></span></div>
<div class="ln" style="top:804px">127</div><div class="cl" style="top:804px"><i class="g" style="left:0.0px"></i><span class="tx"></span></div>
<div class="ln" style="top:824px">128</div><div class="cl" style="top:824px"><i class="g" style="left:0.0px"></i><span class="tx">    <span class="k">return</span> <span class="c">nil</span></span></div>
<div class="ln" style="top:844px">129</div><div class="cl" style="top:844px"><span class="tx"><span class="b1">}</span></span></div>
<div class="bmb" style="left:131px;top:764px"></div><div class="bmb" style="left:475px;top:724px"></div>
<div class="cursor" style="left:138.0px;top:764px"></div>
</div></div>
<div id="shadow" class="abs"></div>
</body></html>
